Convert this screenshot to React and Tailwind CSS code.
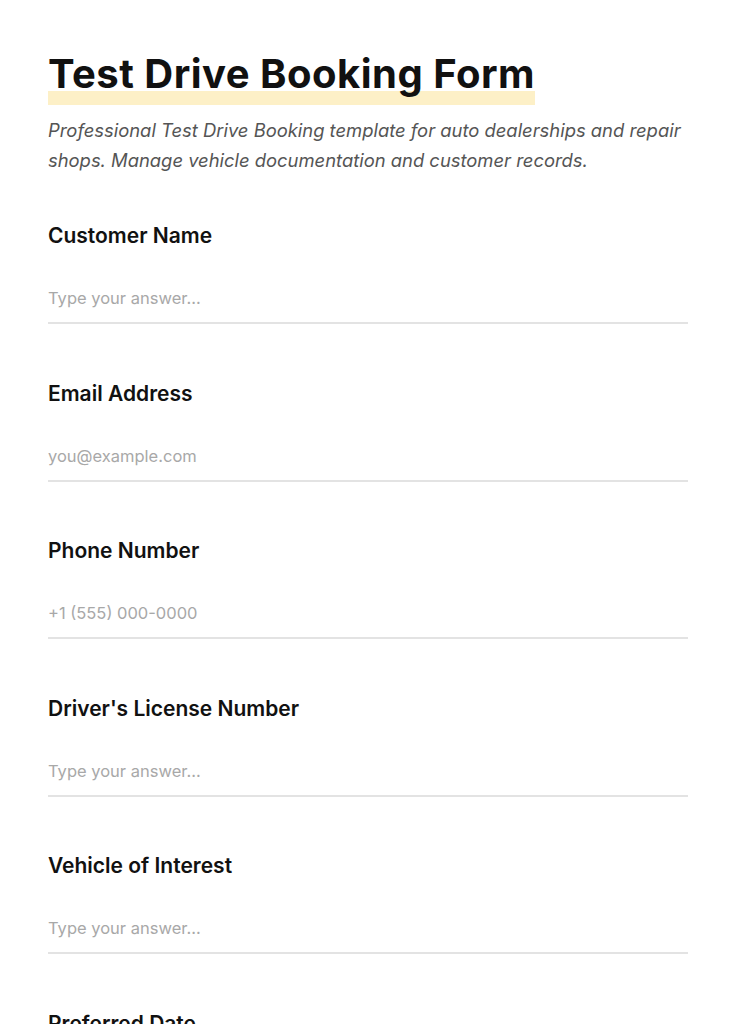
const fields = [
  { label: 'Customer Name', placeholder: 'Type your answer...' },
  { label: 'Email Address', placeholder: 'you@example.com', type: 'email' },
  { label: 'Phone Number', placeholder: '+1 (555) 000-0000', type: 'tel' },
  { label: "Driver's License Number", placeholder: 'Type your answer...' },
  { label: 'Vehicle of Interest', placeholder: 'Type your answer...' },
  { label: 'Preferred Date', placeholder: 'Type your answer...' },
  { label: 'Preferred Time', placeholder: 'Type your answer...' },
]

export default function App() {
  return (
    <div className="min-h-screen bg-white font-['Inter',sans-serif] text-[#111]">
      <div className="px-12 pt-[46px] pb-16">
        {/* heading with marker highlight */}
        <h1 className="inline-block text-[40px] leading-[56px] pb-[3px] font-bold tracking-[0.012em] bg-[linear-gradient(to_bottom,transparent_45px,#fdf0c7_45px)]">
          Test Drive Booking Form
        </h1>
        <p className="mt-[10px] text-[18.4px] leading-[30px] italic text-[#555]">
          Professional Test Drive Booking template for auto dealerships and repair shops. Manage vehicle documentation and customer records.
        </p>

        <div className="mt-[47px]">
          {fields.map(f => (
            <div key={f.label} className="mb-[55.5px]">
              <label className="block text-[21px] leading-[28px] font-semibold">
                {f.label}
              </label>
              <input
                type={f.type || 'text'}
                placeholder={f.placeholder}
                className="mt-6 block w-full h-[50px] border-b-2 border-[#e3e3e3] bg-transparent text-[16.5px] outline-none placeholder:text-[#a8a8a8]"
              />
            </div>
          ))}
        </div>
      </div>
    </div>
  )
}
